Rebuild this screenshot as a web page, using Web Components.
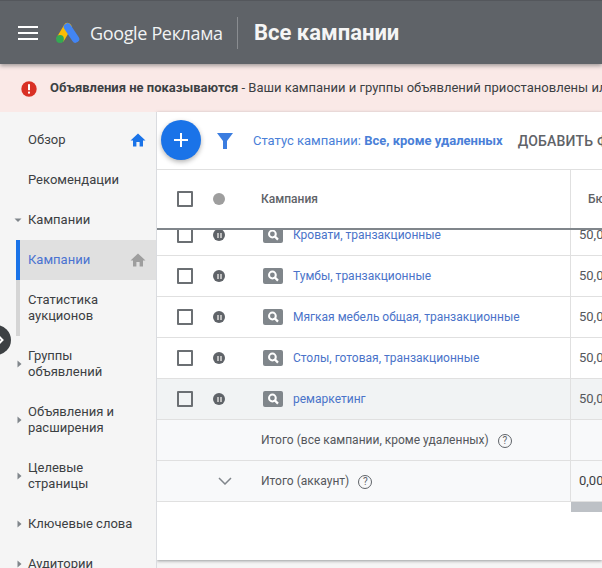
<!DOCTYPE html>
<html lang="ru">
<head>
<meta charset="utf-8">
<title>Google Реклама</title>
<style>
    html, body { margin: 0; height: 568px; overflow: hidden; background: #f5f5f5; }
    body { font-family: Roboto, "Liberation Sans", sans-serif; }
</style>
</head>
<body>
<ads-app></ads-app>
<script>
const ICONS = {
    home: '<path d="M8 1.5 0.5 8.4H3V14.5H6.4V10H9.6V14.5H13V8.4H15.5Z"/>',
    search: '<circle cx="9.4" cy="7" r="3.4" fill="none" stroke="#fff" stroke-width="2"/><path d="M11.8 9.4 15 12.6" stroke="#fff" stroke-width="2.2"/>'
};

class AppHeader extends HTMLElement {
    constructor() {
        super();
        this.attachShadow({ mode: 'open' });
    }
    connectedCallback() {
        this.shadowRoot.innerHTML = `
            <style>
                :host {
                    display: flex;
                    align-items: center;
                    position: relative;
                    z-index: 3;
                    height: 64px;
                    box-sizing: border-box;
                    background: #5f6368;
                    border-top: 1px solid #54575c;
                    color: #fff;
                    box-shadow: 0 2px 4px rgba(60, 64, 67, .45);
                }
                .menu { display: block; margin-left: 18px; margin-right: 18px; }
                .logo { display: block; margin-right: 10px; }
                .brand {
                    font: 400 18px/24px "Open Sans", sans-serif;
                    letter-spacing: -.35px;
                    color: #f1f3f4;
                    white-space: nowrap;
                    width: 147px;
                }
                .sep { width: 1px; height: 32px; background: #8a8d91; margin: 0 16px 0 0; }
                h1 {
                    margin: 0;
                    font: 700 22px/28px Roboto, sans-serif;
                    color: #f5f5f5;
                    white-space: nowrap;
                }
            </style>
            <svg class="menu" width="20" height="14" viewBox="0 0 20 14" fill="#fff">
                <rect y="0" width="20" height="2"/><rect y="6" width="20" height="2"/><rect y="12" width="20" height="2"/>
            </svg>
            <svg class="logo" width="24" height="22" viewBox="0 0 24 22" fill="none">
                <path d="M11.5 5 5 16" stroke="#fbbc04" stroke-width="8" stroke-linecap="round"/>
                <path d="M11.5 5 19.5 17" stroke="#4285f4" stroke-width="7.5" stroke-linecap="round"/>
                <circle cx="4" cy="17" r="3.9" fill="#34a853"/>
            </svg>
            <div class="brand">Google Реклама</div>
            <div class="sep"></div>
            <h1>Все кампании</h1>
        `;
    }
}

class AlertBanner extends HTMLElement {
    constructor() {
        super();
        this.attachShadow({ mode: 'open' });
    }
    connectedCallback() {
        this.shadowRoot.innerHTML = `
            <style>
                :host {
                    display: flex;
                    align-items: center;
                    height: 48px;
                    padding-left: 21px;
                    background: #fae9e7;
                    color: #3c4043;
                    font: 400 13px/16px Roboto, sans-serif;
                    white-space: nowrap;
                    overflow: hidden;
                }
                svg { flex: none; margin-right: 13px; margin-top: 2px; }
                b { font-weight: 700; }
            </style>
            <svg width="16" height="16" viewBox="0 0 16 16">
                <circle cx="8" cy="8" r="7.7" fill="#d93025"/>
                <rect x="7" y="3.2" width="2" height="6" fill="#fff"/>
                <rect x="7" y="10.6" width="2" height="2" fill="#fff"/>
            </svg>
            <span><b>Объявления не показываются</b> - <slot></slot></span>
        `;
    }
}

class NavItem extends HTMLElement {
    constructor() {
        super();
        this.attachShadow({ mode: 'open' });
    }
    connectedCallback() {
        const arrow = this.getAttribute('arrow');
        const icon = this.getAttribute('icon');
        this.shadowRoot.innerHTML = `
            <style>
                :host {
                    display: flex;
                    align-items: center;
                    position: relative;
                    box-sizing: border-box;
                    padding: 12px 0 12px 28px;
                    font: 400 13px/16px Roboto, sans-serif;
                    color: #3c4043;
                }
                :host([sub]) { margin-left: 16px; padding-left: 8px; border-left: 4px solid #d5d5d5; }
                :host([active]) { background: #e0e0e0; border-left-color: #1a73e8; color: #4a73d1; }
                .arrow { position: absolute; left: 14px; top: 50%; margin-top: -4px; }
                .label { flex: 1; max-width: 108px; }
                .icon { flex: none; margin-left: auto; margin-right: 10px; }
            </style>
            ${arrow === 'right' ? '<svg class="arrow" style="left:16px" width="8" height="8" viewBox="0 0 8 8"><path d="M1.5 0.5 5.5 4 1.5 7.5Z" fill="#80868b"/></svg>' : ''}
            ${arrow === 'down' ? '<svg class="arrow" width="8" height="8" viewBox="0 0 8 8"><path d="M0.5 2.5H7.5L4 6Z" fill="#80868b"/></svg>' : ''}
            <div class="label"><slot></slot></div>
            ${icon ? `<svg class="icon" width="16" height="16" viewBox="0 0 16 16" fill="${icon}">${ICONS.home}</svg>` : ''}
        `;
    }
}

class SideNav extends HTMLElement {
    constructor() {
        super();
        this.attachShadow({ mode: 'open' });
    }
    connectedCallback() {
        this.shadowRoot.innerHTML = `
            <style>
                :host {
                    display: block;
                    position: relative;
                    flex: none;
                    width: 157px;
                    box-sizing: border-box;
                    padding-top: 8px;
                    background: #f5f5f5;
                    border-right: 1px solid #dadce0;
                    overflow: hidden;
                }
                .toggle { position: absolute; left: -19px; top: 213px; }
            </style>
            <slot></slot>
            <svg class="toggle" width="30" height="30" viewBox="0 0 30 30">
                <circle cx="15" cy="15" r="15" fill="#3c4043"/>
                <path d="M18 11.5 21.5 15 18 18.5" fill="none" stroke="#fff" stroke-width="2"/>
            </svg>
        `;
    }
}

class FilterBar extends HTMLElement {
    constructor() {
        super();
        this.attachShadow({ mode: 'open' });
    }
    connectedCallback() {
        this.shadowRoot.innerHTML = `
            <style>
                :host {
                    display: flex;
                    align-items: center;
                    height: 58px;
                    flex: none;
                    padding-left: 4px;
                    white-space: nowrap;
                    overflow: hidden;
                    background: #fff;
                    border-bottom: 1px solid #e0e0e0;
                    box-sizing: border-box;
                }
                .fab {
                    flex: none;
                    width: 40px;
                    height: 40px;
                    margin-top: -1px;
                    border-radius: 50%;
                    background: #1a73e8;
                    display: flex;
                    align-items: center;
                    justify-content: center;
                    box-shadow: 0 2px 5px rgba(0, 0, 0, .3);
                }
                .funnel { flex: none; margin: 0 20px 0 16px; }
                .status { font: 400 13px/16px Roboto, sans-serif; color: #4a7fd8; }
                .status b { font-weight: 700; }
                .add { margin-left: 15px; font: 500 14px/16px Roboto, sans-serif; color: #5f6368; letter-spacing: .2px; }
            </style>
            <div class="fab">
                <svg width="14" height="14" viewBox="0 0 14 14" fill="#fff"><rect x="6" width="2" height="14"/><rect y="6" width="14" height="2"/></svg>
            </div>
            <svg class="funnel" width="16" height="16" viewBox="0 0 16 16" fill="#3b7de0"><path d="M0 0H16L10 8V16H6V8Z"/></svg>
            <span class="status">Статус кампании: <b>Все, кроме удаленных</b></span>
            <span class="add">ДОБАВИТЬ ФИЛЬТР</span>
        `;
    }
}

class HelpMark extends HTMLElement {
    constructor() {
        super();
        this.attachShadow({ mode: 'open' });
    }
    connectedCallback() {
        this.shadowRoot.innerHTML = `
            <style>
                :host { display: inline-flex; margin-left: 9px; vertical-align: 0; }
                span {
                    width: 12px;
                    height: 12px;
                    border: 1px solid #5f6368;
                    border-radius: 50%;
                    font: 400 10px/12px Roboto, sans-serif;
                    text-align: center;
                    color: #5f6368;
                }
            </style>
            <span>?</span>
        `;
    }
}

class CampaignRow extends HTMLElement {
    constructor() {
        super();
        this.attachShadow({ mode: 'open' });
    }
    connectedCallback() {
        const kind = this.getAttribute('kind') || 'campaign';
        const value = this.getAttribute('value') || '';
        let lead = '';
        if (kind === 'campaign' || kind === 'head') {
            lead = `<span class="check"></span>
                <span class="dot ${kind === 'head' ? 'plain' : ''}"></span>`;
        } else if (kind === 'account') {
            lead = `<svg class="chevron" width="14" height="8" viewBox="0 0 14 8" fill="none"><path d="M1 1 7 7 13 1" stroke="#80868b" stroke-width="1.5"/></svg>`;
        }
        const chip = kind === 'campaign'
            ? `<svg class="chip" width="20" height="16" viewBox="0 0 20 16"><rect width="20" height="16" rx="2" fill="#80868b"/>${ICONS.search}</svg>`
            : '';
        this.shadowRoot.innerHTML = `
            <style>
                :host {
                    display: flex;
                    align-items: center;
                    height: 41px;
                    box-sizing: border-box;
                    border-bottom: 1px solid #e0e0e0;
                    background: #fff;
                    font: 400 12px/16px Roboto, sans-serif;
                    color: #54575b;
                    white-space: nowrap;
                }
                :host([kind="head"]) { height: 58px; border-bottom: 0; flex: none; font-weight: 500; font-size: 12px; color: #5f6368; }
                :host([kind="total"]), :host([kind="account"]) { background: #f8f9fa; }
                :host([hot]) { background: #f1f3f4; }
                .lead { flex: none; width: 104px; height: 100%; position: relative; display: flex; align-items: center; }
                .check { box-sizing: border-box; width: 16px; height: 16px; margin-left: 20px; border: 2px solid #6b6f73; border-radius: 1px; }
                .dot {
                    width: 12px;
                    height: 12px;
                    margin-left: 20px;
                    border-radius: 50%;
                    background: #5f6368;
                    position: relative;
                }
                .dot::after {
                    content: '';
                    position: absolute;
                    left: 3.5px;
                    top: 3.5px;
                    height: 5px;
                    border-left: 2px solid #bdbdbd;
                    border-right: 2px solid #bdbdbd;
                    width: 1px;
                }
                .dot.plain { background: #9e9e9e; }
                .dot.plain::after { display: none; }
                .chevron { margin-left: 61px; }
                .name { flex: none; width: 309px; height: 100%; display: flex; align-items: center; box-sizing: border-box; overflow: hidden; }
                .chip { flex: none; margin: 0 10px 0 2px; }
                ::slotted(a) { color: #4a73c9; text-decoration: none; }
                .value {
                    flex: 1;
                    height: 100%;
                    display: flex;
                    align-items: center;
                    padding-left: 8px;
                    border-left: 1px solid #e0e0e0;
                    overflow: hidden;
                    font-size: 13px;
                }
                :host([kind="head"]) .value { padding-left: 17px; font-size: 12px; }
                :host([kind="account"]) .value { color: #3c4043; }
            </style>
            <div class="lead">${lead}</div>
            <div class="name">${chip}<span><slot></slot></span></div>
            <div class="value">${value}</div>
        `;
    }
}

class CampaignTable extends HTMLElement {
    constructor() {
        super();
        this.attachShadow({ mode: 'open' });
    }
    connectedCallback() {
        this.shadowRoot.innerHTML = `
            <style>
                :host {
                    display: flex;
                    flex-direction: column;
                    flex: none;
                    height: 390px;
                    background: #fff;
                }
                .head { flex: none; border-bottom: 2px solid #80868b; position: relative; z-index: 1; }
                .rows { flex: 1; overflow: hidden; }
                .inner { margin-top: -15px; }
                .bar { height: 10px; margin-left: 414px; background: #bdc1c6; }
            </style>
            <div class="head"><slot name="head"></slot></div>
            <div class="rows">
                <div class="inner"><slot></slot></div>
                <div class="bar"></div>
            </div>
        `;
    }
}

class AdsApp extends HTMLElement {
    constructor() {
        super();
        this.attachShadow({ mode: 'open' });
    }
    connectedCallback() {
        const names = [
            'Кровати, транзакционные',
            'Тумбы, транзакционные',
            'Мягкая мебель общая, транзакционные',
            'Столы, готовая, транзакционные'
        ];
        const rows = names.map(n => `<campaign-row value="50,00 ₽"><a>${n}</a></campaign-row>`).join('');
        this.shadowRoot.innerHTML = `
            <style>
                :host { display: block; height: 568px; overflow: hidden; }
                .body { display: flex; height: 456px; }
                .main { flex: 1; min-width: 0; display: flex; flex-direction: column; }
                .card { flex: none; height: 448px; display: flex; flex-direction: column; background: #fff; box-shadow: 0 1px 3px rgba(60, 64, 67, .5); }
            </style>
            <app-header></app-header>
            <alert-banner>Ваши кампании и группы объявлений приостановлены или удалены</alert-banner>
            <div class="body">
                <side-nav>
                    <nav-item icon="#1a73e8">Обзор</nav-item>
                    <nav-item>Рекомендации</nav-item>
                    <nav-item arrow="down">Кампании</nav-item>
                    <nav-item sub active icon="#9e9e9e">Кампании</nav-item>
                    <nav-item sub>Статистика аукционов</nav-item>
                    <nav-item arrow="right">Группы объявлений</nav-item>
                    <nav-item arrow="right">Объявления и расширения</nav-item>
                    <nav-item arrow="right">Целевые страницы</nav-item>
                    <nav-item arrow="right">Ключевые слова</nav-item>
                    <nav-item arrow="right">Аудитории</nav-item>
                </side-nav>
                <div class="main">
                    <div class="card">
                        <filter-bar></filter-bar>
                        <campaign-table>
                            <campaign-row slot="head" kind="head" value="Бюджет">Кампания</campaign-row>
                            ${rows}
                            <campaign-row hot value="50,00 ₽"><a>ремаркетинг</a></campaign-row>
                            <campaign-row kind="total">Итого (все кампании, кроме удаленных)<help-mark></help-mark></campaign-row>
                            <campaign-row kind="account" value="0,00 ₽">Итого (аккаунт)<help-mark></help-mark></campaign-row>
                        </campaign-table>
                    </div>
                </div>
            </div>
        `;
    }
}

customElements.define('app-header', AppHeader);
customElements.define('alert-banner', AlertBanner);
customElements.define('nav-item', NavItem);
customElements.define('side-nav', SideNav);
customElements.define('filter-bar', FilterBar);
customElements.define('help-mark', HelpMark);
customElements.define('campaign-row', CampaignRow);
customElements.define('campaign-table', CampaignTable);
customElements.define('ads-app', AdsApp);
</script>
</body>
</html>
